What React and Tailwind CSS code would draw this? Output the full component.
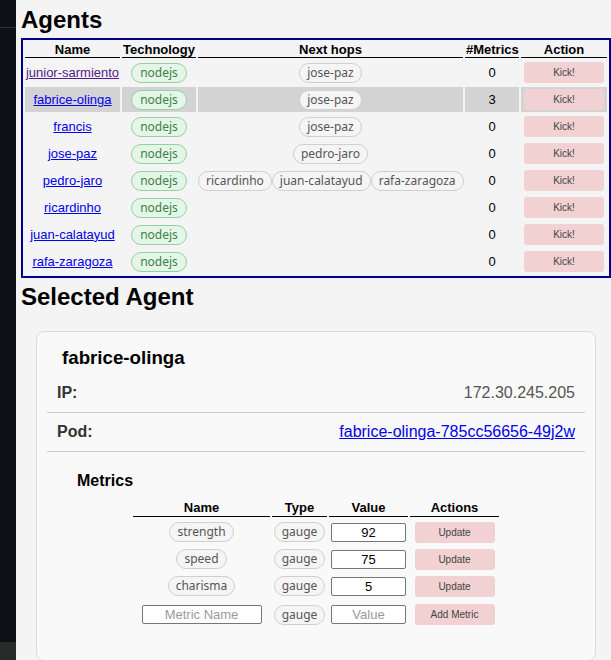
import React from "react";

const agents = [
  { name: "junior-sarmiento", hops: ["jose-paz"], metrics: 0, visited: true },
  { name: "fabrice-olinga", hops: ["jose-paz"], metrics: 3, selected: true },
  { name: "francis", hops: ["jose-paz"], metrics: 0 },
  { name: "jose-paz", hops: ["pedro-jaro"], metrics: 0 },
  { name: "pedro-jaro", hops: ["ricardinho", "juan-calatayud", "rafa-zaragoza"], metrics: 0 },
  { name: "ricardinho", hops: [], metrics: 0 },
  { name: "juan-calatayud", hops: [], metrics: 0 },
  { name: "rafa-zaragoza", hops: [], metrics: 0 },
];

const metrics = [
  { name: "strength", value: "92" },
  { name: "speed", value: "75" },
  { name: "charisma", value: "5" },
];

function Pill({ children, green }) {
  return (
    <span
      className={
        green
          ? "inline-block rounded-full border border-[#93d29f] bg-[#e4f6e7] px-2 text-[12px] leading-[18px] text-[#3f7f47] font-['Noto_Sans',sans-serif] align-middle"
          : "inline-block rounded-full border border-[#cfcfcf] bg-[#f5f5f5] px-[7px] text-[12px] leading-[18px] text-[#555] font-['Noto_Sans',sans-serif] align-middle"
      }
    >
      {children}
    </span>
  );
}

function PinkButton({ children }) {
  return (
    <button className="w-[80px] h-[21px] bg-[#f1d1d1] rounded-[3px] text-[10px] text-[#444] align-middle">
      {children}
    </button>
  );
}

export default function App() {
  return (
    <div className="flex h-[660px] overflow-hidden bg-[#f4f4f4] font-['Liberation_Sans',Arial,sans-serif] text-black">
      <div className="w-[16px] shrink-0 flex flex-col bg-[#0d1117]">
        <div className="h-[28px] border-b border-[#30363d]" />
        <div className="flex-1" />
        <div className="h-[18px] bg-[#272c2b]" />
      </div>
      <main className="flex-1 pl-[5px]">
        <h1 className="text-[24px] font-bold leading-[32px] mt-[4px] mb-[2px]">Agents</h1>
        <table className="w-[590px] table-fixed border-2 border-[#00008b] border-separate border-spacing-[2px]">
          <colgroup>
            <col className="w-[95px]" />
            <col className="w-[74px]" />
            <col className="w-[265px]" />
            <col className="w-[54px]" />
            <col className="w-[86px]" />
          </colgroup>
          <thead>
            <tr>
              {["Name", "Technology", "Next hops", "#Metrics", "Action"].map((h) => (
                <th key={h} className="p-[1px] text-[13px] leading-[13px] font-bold border-b border-black whitespace-nowrap">
                  {h}
                </th>
              ))}
            </tr>
          </thead>
          <tbody>
            {agents.map((a) => {
              const td = "h-[25px] p-0 text-center align-middle text-[13px] whitespace-nowrap " + (a.selected ? "bg-[#d3d3d3]" : "");
              return (
                <tr key={a.name}>
                  <td className={td}>
                    <a href="#" className={"underline " + (a.visited ? "text-[#551a8b]" : "text-[#0000ee]")}>
                      {a.name}
                    </a>
                  </td>
                  <td className={td}>
                    <Pill green>nodejs</Pill>
                  </td>
                  <td className={td}>
                    {a.hops.map((h) => (
                      <Pill key={h}>{h}</Pill>
                    ))}
                  </td>
                  <td className={td}>{a.metrics}</td>
                  <td className={td}>
                    <PinkButton>Kick!</PinkButton>
                  </td>
                </tr>
              );
            })}
          </tbody>
        </table>
        <h1 className="text-[24px] font-bold leading-[32px] mt-[3px]">Selected Agent</h1>
        <div className="mx-[15px] mt-[18px] border border-[#dddddd] rounded-[8px] bg-[#f9f9f9] px-[10px]">
          <h3 className="pl-[15px] pt-[15px] text-[18.72px] font-bold leading-[22px]">fabrice-olinga</h3>
          <div className="mt-[5px] flex justify-between px-[10px] py-[10px] text-[16px] leading-[18px] border-b border-[#cccccc]">
            <span className="font-bold text-[#333]">IP:</span>
            <span className="text-[#555]">172.30.245.205</span>
          </div>
          <div className="flex justify-between px-[10px] py-[10px] text-[16px] leading-[18px] border-b border-[#cccccc]">
            <span className="font-bold text-[#333]">Pod:</span>
            <a href="#" className="underline text-[#0000ee]">fabrice-olinga-785cc56656-49j2w</a>
          </div>
          <div className="pt-[20px] pb-[30px]">
            <h4 className="pl-[30px] text-[16px] font-bold leading-[18px]">Metrics</h4>
            <table className="mx-auto mt-[7px] w-[370px] table-fixed border-separate border-spacing-[2px]">
              <colgroup>
                <col className="w-[137px]" />
                <col className="w-[55px]" />
                <col className="w-[79px]" />
                <col className="w-[89px]" />
              </colgroup>
              <thead>
                <tr>
                  {["Name", "Type", "Value", "Actions"].map((h) => (
                    <th key={h} className="p-[1px] text-[13px] leading-[15px] font-bold border-b border-black">
                      {h}
                    </th>
                  ))}
                </tr>
              </thead>
              <tbody>
                {metrics.map((m) => (
                  <tr key={m.name}>
                    <td className="h-[25px] p-0 text-center align-middle">
                      <Pill>{m.name}</Pill>
                    </td>
                    <td className="h-[25px] p-0 text-center align-middle">
                      <Pill>gauge</Pill>
                    </td>
                    <td className="h-[25px] p-0 text-center align-middle">
                      <input
                        readOnly
                        value={m.value}
                        className="w-[75px] h-[19px] border border-[#767676] rounded-[2px] bg-white text-center text-[13px] align-middle"
                      />
                    </td>
                    <td className="h-[25px] p-0 text-center align-middle">
                      <PinkButton>Update</PinkButton>
                    </td>
                  </tr>
                ))}
                <tr>
                  <td className="h-[28px] p-0 text-center align-middle">
                    <input
                      placeholder="Metric Name"
                      className="w-[120px] h-[19px] border border-[#767676] rounded-[2px] bg-white text-center text-[13px] placeholder:text-[#9a9a9a] align-middle"
                    />
                  </td>
                  <td className="h-[28px] p-0 text-center align-middle">
                    <Pill>gauge</Pill>
                  </td>
                  <td className="h-[28px] p-0 text-center align-middle">
                    <input
                      placeholder="Value"
                      className="w-[75px] h-[19px] border border-[#767676] rounded-[2px] bg-white text-center text-[13px] placeholder:text-[#9a9a9a] align-middle"
                    />
                  </td>
                  <td className="h-[28px] p-0 text-center align-middle">
                    <PinkButton>Add Metric</PinkButton>
                  </td>
                </tr>
              </tbody>
            </table>
          </div>
        </div>
      </main>
    </div>
  );
}
